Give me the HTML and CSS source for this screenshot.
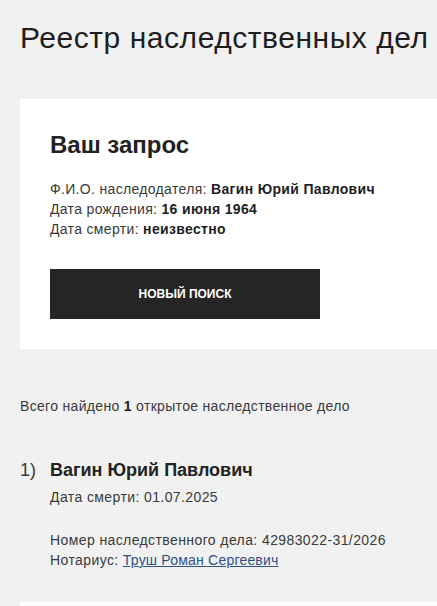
FILE: index.html
```html
<!DOCTYPE html>
<html lang="ru">
<head>
<meta charset="utf-8">
<title>Реестр наследственных дел</title>
<link rel="stylesheet" href="styles.css">
</head>
<body>
<div class="page">
  <h1 class="title">Реестр наследственных дел</h1>
  <section class="card">
    <h2 class="card-title">Ваш запрос</h2>
    <div class="info">
      <div>Ф.И.О. наследодателя: <b>Вагин Юрий Павлович</b></div>
      <div>Дата рождения: <b>16 июня 1964</b></div>
      <div>Дата смерти: <b>неизвестно</b></div>
    </div>
    <button class="btn">Новый поиск</button>
  </section>
  <p class="summary">Всего найдено <b>1</b> открытое наследственное дело</p>
  <ol class="results">
    <li class="result">
      <span class="num">1)</span>
      <div class="result-body">
        <div class="name">Вагин Юрий Павлович</div>
        <div class="line">Дата смерти: 01.07.2025</div>
        <div class="details">
          <div class="line">Номер наследственного дела: 42983022-31/2026</div>
          <div class="line">Нотариус: <a class="link" href="#">Труш Роман Сергеевич</a></div>
        </div>
      </div>
    </li>
  </ol>
  <section class="card card-next"></section>
</div>
</body>
</html>
```
FILE: styles.css
```css
html, body {
  margin: 0;
  padding: 0;
  background: #f1f1f1;
  overflow: hidden;
}
body {
  font-family: "Liberation Sans", Arial, sans-serif;
  color: #222;
}
.page {
  padding-left: 20px;
}
.title {
  margin: 0;
  padding-top: 20px;
  font-size: 30px;
  line-height: 36px;
  font-weight: 400;
  letter-spacing: 0.55px;
  white-space: nowrap;
  color: #1e1e1e;
}
.card {
  background: #fff;
  margin-top: 43px;
  padding: 31px 30px 30px 30px;
}
.card-title {
  margin: 0;
  font-size: 24px;
  line-height: 30px;
  font-weight: 700;
  color: #222;
}
.info {
  margin-top: 19px;
  font-size: 14px;
  line-height: 20px;
  letter-spacing: 0.33px;
  color: #3a3a3a;
}
.info b {
  color: #1e1e1e;
}
.btn {
  display: block;
  margin-top: 30px;
  width: 270px;
  height: 50px;
  border: 0;
  background: #252525;
  color: #fff;
  font-family: "Liberation Sans", Arial, sans-serif;
  font-weight: 700;
  font-size: 12px;
  text-transform: uppercase;
  cursor: pointer;
}
.summary {
  margin: 47px 0 0;
  font-size: 14px;
  line-height: 20px;
  letter-spacing: 0.32px;
  color: #3a3a3a;
}
.summary b {
  color: #1e1e1e;
}
.results {
  list-style: none;
  margin: 42px 0 0;
  padding: 0;
}
.result {
  display: flex;
}
.num {
  width: 30px;
  flex: none;
  font-size: 18px;
  line-height: 24px;
  color: #3a3a3a;
}
.name {
  font-size: 18px;
  line-height: 24px;
  font-weight: 700;
  color: #222;
}
.line {
  font-size: 14px;
  line-height: 20px;
  letter-spacing: 0.4px;
  color: #3a3a3a;
}
.result-body > .line {
  margin-top: 5px;
}
.details {
  margin-top: 23px;
}
.link {
  color: #2f5188;
  text-decoration: underline;
  letter-spacing: 0.2px;
}
.card-next {
  margin-top: 32px;
  height: 60px;
  padding: 0;
}
```
